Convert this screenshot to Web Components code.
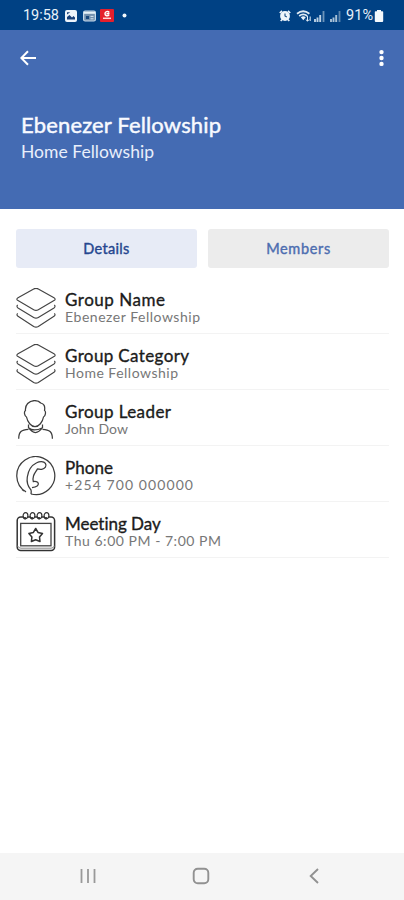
<!DOCTYPE html>
<html lang="en"><head><meta charset="utf-8"><title>Group details</title>
<style>html,body{margin:0;height:100%;background:#fff}body{overflow:hidden}</style></head>
<body><group-screen></group-screen>
<script>
const define=(name,html,after)=>customElements.define(name,class extends HTMLElement{
  connectedCallback(){
    if(this.shadowRoot)return;
    const t=document.createElement('template');t.innerHTML=html;
    this.attachShadow({mode:'open'}).append(t.content.cloneNode(true));
    if(after)after(this);
  }
});

// One line of text, tracked so that it fills the given width.
define('fit-text',`<style>:host{display:block;white-space:nowrap}span{display:block;width:max-content}</style><span><slot></slot></span>`,el=>{
  const s=el.shadowRoot.querySelector('span');
  const n=el.textContent.length,w=s.getBoundingClientRect().width,want=+el.getAttribute('w');
  if(want&&w)s.style.letterSpacing=((want-w)/(n-1))+'px';
});

define('status-bar',`<style>
:host{display:flex;height:30px;box-sizing:border-box;background:#004184;color:#e8f1fa;align-items:center;padding:1px 20px 0 23px;font:400 14.5px/20px Roboto,sans-serif}
svg{display:block}.l{display:flex;align-items:center;gap:5px;flex:1}.l fit-text{width:37px}.r{display:flex;align-items:center}
</style>
<div class="l"><fit-text w="36">19:58</fit-text>
<svg width="12" height="12" viewBox="0 0 12 12"><rect width="12" height="12" rx="2" fill="#edf4fb"/><path d="M2 9.5V7l2.5-2L7 7.5 8.5 6l1.5 1.5v2z" fill="#173f78"/><path d="M2 2.2h3.2L2 4.500z" fill="#173f78"/></svg>
<svg width="13" height="12" viewBox="0 0 13 12" style="margin-left:1px"><rect x=".6" y="1" width="11.8" height="10" rx="1.5" fill="#7390ae" stroke="#c9dcec" stroke-width="1.2"/><path d="M1 2.8h11" stroke="#e5f1f8" stroke-width="2"/><path d="M3 6h3v3H3z" fill="#17477d"/><path d="M7.5 6.4h3M7.5 8.8h3" stroke="#dbe9f3"/></svg>
<svg width="14" height="13" viewBox="0 0 14 13" style="margin-left:-1px"><rect width="14" height="13" rx="1" fill="#e51f2c"/><path d="M9.3 3.5C7.8 1.8 5 2.5 5 4.8c0 2 2.5 2.8 4.2 1.2M6.5 4.7h3" stroke="#fff" stroke-width="1.5" fill="none"/><path d="M3 9.3h8" stroke="#ffd6d6" stroke-width="1.5"/></svg>
<svg width="5" height="5" viewBox="0 0 5 5" style="margin-left:3px"><circle cx="2.5" cy="2.5" r="2" fill="#f2f7fb"/></svg></div>
<div class="r">
<svg width="12" height="12" viewBox="0 0 12 12"><path d="M.8 3L3 .8M11.2 3L9 .8M1.7 11l1.5-1.5M10.3 11L8.8 9.5" stroke="#eef5fb" stroke-width="1.7"/><circle cx="6" cy="6" r="4.9" fill="#eef5fb"/><path d="M6 3.5V6l1.8 1" stroke="#164b83" stroke-width="1.1" fill="none"/></svg>
<svg width="16" height="12" viewBox="0 0 16 12" style="margin-left:5px"><path d="M1 3.7Q7.2-1.2 13.4 3.7M3.2 6Q7.2 2.8 11.2 6" stroke="#dfeaf3" stroke-width="1.8" fill="none"/><path d="M4.8 7.3Q7.3 5.3 9.8 7.3L7.3 10.3z" fill="#e9f3fa"/><path d="M11.5 6v5M9.8 9.5l1.7 1.7 1.7-1.7M14.2 11V6.5" stroke="#e0ebf4" fill="none"/></svg>
<svg width="11" height="12" viewBox="0 0 11 12" style="margin-left:2px"><path d="M1 9v3M3.5 7.5V12M6.2 5v7" stroke="#bdd2e5" stroke-width="1.9"/><path d="M9.5 1v11" stroke="#6c94ba" stroke-width="1.8"/></svg>
<svg width="11" height="12" viewBox="0 0 11 12" style="margin-left:5px"><path d="M1 9v3M3.5 7.5V12M6.2 5v7" stroke="#a9c2d8" stroke-width="1.9"/><path d="M9.5 1v11" stroke="#5f87ae" stroke-width="1.8"/></svg>
<fit-text w="27" style="margin-left:5px;width:28px">91%</fit-text>
<svg width="10" height="12" viewBox="0 0 10 12"><path d="M3 0h4v1.2h1.4Q9.2 1.2 9.2 2v9q0 1-1 1H1.8q-1 0-1-1V2q0-.8.8-.8H3z" fill="#f4f9fd"/></svg>
</div>`);

define('app-header',`<style>
:host{display:block;height:179px;box-sizing:border-box;background:#446bb3;color:#f8faff;padding:18px 19px 0 20px}
nav{display:flex;justify-content:space-between;height:20px;align-items:center}
svg{display:block}.t{font:400 22px/28px Lato,sans-serif;-webkit-text-stroke:.45px #f8faff;margin:43px 0 0 1px}.s{font:400 17.5px/24px Lato,sans-serif;margin:1px 0 0 1px;color:#e9effb}
</style>
<nav><svg width="16" height="16" viewBox="0 0 16 16"><path d="M8 1.2L1.3 8 8 14.8M1.500 8H16" fill="none" stroke="#fff" stroke-width="2"/></svg>
<svg width="5" height="18" viewBox="0 0 5 18" style="margin-right:1px"><g fill="#fff"><circle cx="2.5" cy="3.1" r="2.2"/><circle cx="2.5" cy="9" r="2.2"/><circle cx="2.5" cy="14.9" r="2.2"/></g></svg></nav>
<fit-text class="t" w="200">Ebenezer Fellowship</fit-text><fit-text class="s" w="133">Home Fellowship</fit-text>`);

define('tab-button',`<style>
:host{display:flex;height:39px;border-radius:3px;align-items:center;justify-content:center;background:#ececec;color:#4d6db0;font:400 14.5px/20px Lato,sans-serif;-webkit-text-stroke:.4px currentColor}
:host([active]){background:#e7ebf6;color:#25468f}
</style><slot></slot>`);

const icons={
layers:`<g fill="#fff" stroke="#444" stroke-width="1.15" stroke-linejoin="round"><path d="M1.600 25.300Q.2 27.100 2 28.300L17.700 38.400Q20 39.800 22.300 38.400L38 28.300Q39.800 27.100 38.400 25.300"/><path d="M1.600 16.800Q.2 18.700 2 19.900L17.700 29.500Q20 30.900 22.300 29.500L38 19.900Q39.800 18.700 38.400 16.800"/><path d="M17.700 .9Q20 -.3 22.300 .9L38 9.800Q40.300 11.200 38 12.600L22.300 21.700Q20 23 17.700 21.700L2 12.600Q-.3 11.200 2 9.800z"/></g>`,
person:`<g fill="none" stroke="#3d3d3d" stroke-width="1.25" stroke-linejoin="round"><path d="M9.500 10.500C8.800 5 13 .6 18.500.6c3 0 5 .9 6.200 2.400 3.300.5 4.600 3.400 3.800 7.500 1.800.8.900 5.800-1 6.500-.8 5-4.700 9.700-8.500 9.700s-7.500-4.700-8.500-9.700c-1.900-.7-2.900-5.400-1-6.500z"/><path d="M12.500 24.500v3.200q6.800 9.600 14 0v-3.200M12.500 27.700q5 4.500 14 0"/><path d="M12.500 29.300C5.500 29.700 2.700 31.500 2.700 38.800M26.500 29.300c7 .4 9.900 2.200 9.900 9.500"/></g>`,
phone:`<g fill="none" stroke="#3d3d3d" stroke-width="1.25" stroke-linejoin="round"><path d="M10 35.900A19 19 0 1 1 15 38M6 33.400l2 1.500"/><path d="M15 38.200c.2-1.500.5-2.900 0-4.200-3.200-3.700-4.600-7.500-3.700-13C12.200 14.500 16 9 20.700 6.700c3-1.600 7-1.700 8.700.6 1.700 2.700-.4 5.500-3.700 6-1.700.2-2.800-.5-4.200-.5-.9 2.200-3 4-4 7.200-.8 2.800-.8 4.300-.2 5.700 1.600-.6 4.600-.1 5 1.600.4 2.300-2.300 3.700-6.300 4.400"/></g>`,
calendar:`<rect x="1.200" y="5" width="37.400" height="33.500" rx="3.500" fill="#fff" stroke="#333" stroke-width="1.500"/><path d="M1.500 33.800q1 2.400 3.500 2.400h30q2.500 0 3.500-2.400" stroke="#888" fill="none"/><rect x="4.700" y="11.400" width="30.300" height="22.400" fill="none" stroke="#444" stroke-width="1.300"/><g fill="#fff" stroke="#333" stroke-width="1.200"><ellipse cx="9.500" cy="3.700" rx="2.400" ry="3"/><ellipse cx="16.500" cy="3.700" rx="2.400" ry="3"/><ellipse cx="23.500" cy="3.700" rx="2.400" ry="3"/><ellipse cx="30.500" cy="3.700" rx="2.400" ry="3"/></g><g fill="#333"><circle cx="9" cy="6.200" r="1.300"/><circle cx="16" cy="6.200" r="1.300"/><circle cx="23" cy="6.200" r="1.300"/><circle cx="30" cy="6.200" r="1.300"/></g><path d="M19.700 16.500l2.300 3.900 4.500 1-3 3.500.5 4.600-4.300-1.700-4.300 1.700.5-4.600-3-3.500 4.500-1z" fill="#fff" stroke="#333" stroke-width="1.500" stroke-linejoin="round"/>`};

define('detail-row',`<style>
:host{display:flex;height:56px;box-sizing:border-box;border-bottom:1px solid #f3f3f3;padding-top:10px;gap:9px}
svg{display:block;flex:none}.a{font:400 17px/18px Lato,sans-serif;color:#1b1b1b;-webkit-text-stroke:.35px #1b1b1b;margin-top:3px}.b{font:400 14px/16px Lato,sans-serif;color:#777}
</style><svg width="40" height="40" viewBox="0 0 40 40"></svg><div><div class="a"><slot name="label"></slot></div><div class="b"><slot></slot></div></div>`,el=>{
  el.shadowRoot.querySelector('svg').innerHTML=icons[el.getAttribute('icon')];
});

define('system-nav',`<style>
:host{display:grid;grid-template-columns:repeat(3,113px);justify-content:center;height:47px;box-sizing:border-box;background:#f5f5f5;align-items:center;justify-items:center;padding:0 2px 1px 0}
svg{display:block}
</style>
<svg width="16" height="16" viewBox="0 0 16 16"><path d="M1.500 1v14M8 1v14M14.500 1v14" stroke="#999" stroke-width="1.800"/></svg>
<svg width="18" height="18" viewBox="0 0 18 18"><rect x="1.700" y="1.700" width="14.600" height="14.600" rx="4" fill="none" stroke="#919191" stroke-width="1.900"/></svg>
<svg width="10" height="16" viewBox="0 0 10 16"><path d="M9 1L1.700 8 9 15" stroke="#919191" stroke-width="1.900" fill="none"/></svg>`);

define('group-screen',`<style>
:host{display:flex;flex-direction:column;width:404px;height:900px;background:#fff}
.tabs{display:grid;grid-template-columns:1fr 1fr;gap:11px;padding:20px 15px 0 16px}
.list{flex:1;padding:10px 15px 0 16px}
</style><status-bar></status-bar><app-header></app-header>
<div class="tabs"><tab-button active><fit-text w="46">Details</fit-text></tab-button><tab-button><fit-text w="64">Members</fit-text></tab-button></div>
<div class="list">
<detail-row icon="layers"><fit-text slot="label" w="100">Group Name</fit-text><fit-text w="135">Ebenezer Fellowship</fit-text></detail-row>
<detail-row icon="layers"><fit-text slot="label" w="124">Group Category</fit-text><fit-text w="113">Home Fellowship</fit-text></detail-row>
<detail-row icon="person"><fit-text slot="label" w="106">Group Leader</fit-text><fit-text w="63">John Dow</fit-text></detail-row>
<detail-row icon="phone"><fit-text slot="label" w="48">Phone</fit-text><fit-text w="128">+254 700 000000</fit-text></detail-row>
<detail-row icon="calendar"><fit-text slot="label" w="96">Meeting Day</fit-text><fit-text w="156">Thu 6:00 PM - 7:00 PM</fit-text></detail-row>
</div><system-nav></system-nav>
`);
</script></body></html>
